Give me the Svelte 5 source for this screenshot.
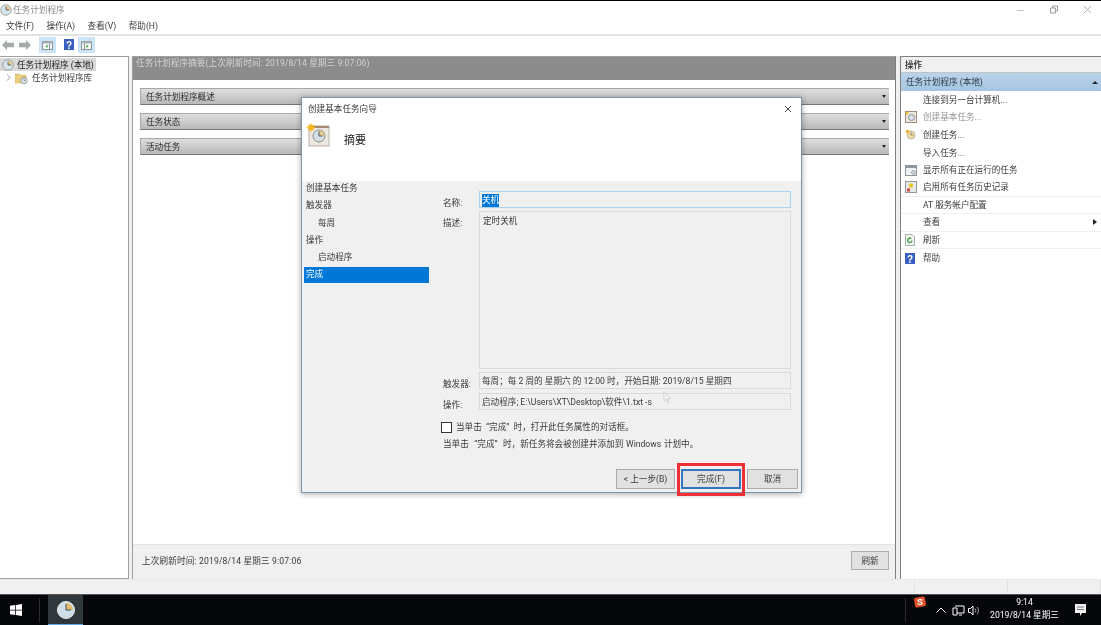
<script>
  const leftMenu = ["文件(F)", "操作(A)", "查看(V)", "帮助(H)"];
  const sections = ["任务计划程序概述", "任务状态", "活动任务"];
  const steps = [
    { label: "创建基本任务" },
    { label: "触发器" },
    { label: "每周", sub: true },
    { label: "操作" },
    { label: "启动程序", sub: true },
    { label: "完成", active: true }
  ];
  const actions = [
    { label: "连接到另一台计算机..." },
    { label: "创建基本任务...", icon: "basic", muted: true },
    { label: "创建任务...", icon: "task" },
    { label: "导入任务..." },
    { label: "显示所有正在运行的任务", icon: "running" },
    { label: "启用所有任务历史记录", icon: "history", line: true },
    { label: "AT 服务帐户配置", line: true },
    { label: "查看", arrow: true, line: true },
    { label: "刷新", icon: "refresh", line: true },
    { label: "帮助", icon: "help" }
  ];
</script>

{#snippet clock(size)}
  <svg width={size} height={size} viewBox="0 0 16 16">
    <circle cx="8" cy="8" r="7" fill="#d9e4ea" stroke="#8a8f8c" />
    <path d="M8 8V2.200A5.800 5.800 0 0 1 13.800 8Z" fill="#e8c987" />
    <path d="M8 3.500V8H12" fill="none" stroke="#3c4a58" stroke-width="1" />
  </svg>
{/snippet}

{#snippet helpIcon()}
  <svg width="10" height="11" viewBox="0 0 10 11">
    <rect width="10" height="11" fill="#3a5fc0" />
    <text x="5" y="9.500" text-anchor="middle" class="helpmark">?</text>
  </svg>
{/snippet}

{#snippet paneIcon(right)}
  <svg width="17" height="16" viewBox="0 0 17 16">
    <rect width="17" height="16" fill="#cce4f7" />
    <rect x="3.500" y="4.500" width="10" height="8" fill="#f4f6f6" stroke="#8d9696" />
    <rect x="3.500" y="4.500" width="10" height="2" fill="#a9b3b6" />
    <path d={right ? "M8.500 7.500l2 1.800-2 1.800Z" : "M8.500 7.500l-2 1.800 2 1.800Z"} fill="#3f9a3a" />
    <path d={right ? "M6.500 6.500v6" : "M10.500 6.500v6"} stroke="#8d9696" fill="none" />
  </svg>
{/snippet}

<div class="screen">
  <div class="window">
    <header class="titlebar">
      <div class="app-title">
        {@render clock(12)}
        <span>任务计划程序</span>
      </div>
      <div class="caption">
        <svg width="10" height="10" viewBox="0 0 10 10"><path d="M0 5.500h7" stroke="#c4c4c4" fill="none" /></svg>
        <svg width="10" height="10" viewBox="0 0 10 10"><path d="M.5 3h5v5h-5zM2.500 3V1h5v5h-2" stroke="#9a9a9a" fill="none" /></svg>
        <svg width="10" height="10" viewBox="0 0 10 10"><path d="M1 1l7 7M8 1L1 8" stroke="#b0b0b0" fill="none" /></svg>
      </div>
    </header>

    <nav class="menubar">
      {#each leftMenu as item}
        <span>{item}</span>
      {/each}
    </nav>

    <div class="toolbar">
      <svg class="arrow" width="12" height="10" viewBox="0 0 12 10"><path d="M0 5l5-5v2.800h7v4.400H5V10Z" fill="#a3aaa7" /></svg>
      <svg class="arrow" width="12" height="10" viewBox="0 0 12 10"><path d="M12 5L7 0v2.800H0v4.400h7V10Z" fill="#a3aaa7" /></svg>
      {@render paneIcon(false)}
      <span class="tool-help">{@render helpIcon()}</span>
      {@render paneIcon(true)}
    </div>

    <main class="panes">
      <aside class="tree">
        <div class="tree-row selected">
          {@render clock(12)}
          <span>任务计划程序 (本地)</span>
        </div>
        <div class="tree-row child">
          <svg width="5" height="7" viewBox="0 0 5 7"><path d="M1 .5l3 3-3 3" stroke="#9a9a9a" fill="none" /></svg>
          <svg width="13" height="12" viewBox="0 0 13 12">
            <path d="M0 2h4l1 1h6v8H0Z" fill="#eccf7e" stroke="#c9a850" stroke-width=".5" />
            <circle cx="9" cy="8.500" r="3.200" fill="#dfe7ea" stroke="#6c7c88" stroke-width=".7" />
            <path d="M9 6.500v2h1.500" stroke="#3c4a58" stroke-width=".6" fill="none" />
          </svg>
          <span>任务计划程序库</span>
        </div>
      </aside>

      <section class="center">
        <div class="center-head">任务计划程序摘要(上次刷新时间: 2019/8/14 星期三 9:07:06)</div>
        <div class="center-body">
          {#each sections as s}
            <div class="band"><span>{s}</span><i class="caret down"></i></div>
          {/each}
        </div>
        <div class="center-foot">
          <span>上次刷新时间: 2019/8/14 星期三 9:07:06</span>
          <button class="refresh">刷新</button>
        </div>
      </section>

      <aside class="actions">
        <div class="actions-head">操作</div>
        <div class="actions-sub"><span>任务计划程序 (本地)</span><i class="caret up"></i></div>
        <ul>
          {#each actions as a}
            <li class:line={a.line} class:muted={a.muted}>
              <span class="a-icon">
                {#if a.icon === "basic"}
                  <svg width="12" height="12" viewBox="0 0 12 12">
                    <rect x=".5" y=".5" width="11" height="11" fill="#ece7dd" stroke="#a08a7a" />
                    <circle cx="6.500" cy="6.500" r="3" fill="#d9e4ea" stroke="#8a8f8c" />
                    <circle cx="2" cy="2" r="1.500" fill="#f2c230" />
                  </svg>
                {:else if a.icon === "task"}
                  <svg width="11" height="11" viewBox="0 0 11 11">
                    <circle cx="6" cy="6" r="4" fill="#f0d9a0" stroke="#b9b9a8" />
                    <path d="M6 3.500V6h2" stroke="#6a6a6a" fill="none" stroke-width=".7" />
                    <circle cx="2.500" cy="2.500" r="1.800" fill="#ecb52c" />
                  </svg>
                {:else if a.icon === "running"}
                  <svg width="12" height="11" viewBox="0 0 12 11">
                    <rect x=".5" y=".5" width="11" height="10" fill="#eef1f2" stroke="#8d9696" />
                    <rect x="1" y="1" width="10" height="2" fill="#8d99a3" />
                    <circle cx="8.500" cy="7.500" r="2" fill="#c9d7df" stroke="#7d8a93" stroke-width=".6" />
                  </svg>
                {:else if a.icon === "history"}
                  <svg width="12" height="12" viewBox="0 0 12 12">
                    <rect x=".5" y=".5" width="11" height="11" fill="#e6ebe9" stroke="#8f9a9a" />
                    <circle cx="6" cy="4.500" r="2.200" fill="#ecc62e" />
                    <rect x="2" y="7.500" width="3" height="3" fill="#d24b3e" />
                  </svg>
                {:else if a.icon === "refresh"}
                  <svg width="10" height="12" viewBox="0 0 10 12">
                    <path d="M.5.500h6.500l2.500 2.500v8.500H.5Z" fill="#f3f6f3" stroke="#a7b0a9" />
                    <path d="M7 6.500A2.200 2.200 0 1 1 5 4.200" fill="none" stroke="#3c9a46" stroke-width="1.300" />
                    <path d="M4.500 2.800l2.300 1.400-2.300 1.400Z" fill="#3c9a46" />
                  </svg>
                {:else if a.icon === "help"}
                  {@render helpIcon()}
                {/if}
              </span>
              <span class="a-label">{a.label}</span>
              {#if a.arrow}<i class="caret right"></i>{/if}
            </li>
          {/each}
        </ul>
      </aside>
    </main>

    <footer class="status">
      <span></span><span></span><span></span>
    </footer>
  </div>

  <div class="taskbar">
    <svg class="win" width="12" height="12" viewBox="0 0 13 13">
      <path d="M0 2l5.500-.8v5H0ZM6.300 1.100L13 0v6.200H6.300ZM0 7h5.500v5L0 11.200ZM6.300 7H13v6l-6.700-1Z" fill="#fff" />
    </svg>
    <span class="task-sep"></span>
    <div class="task-app">
      <svg width="18" height="18" viewBox="0 0 18 18">
        <circle cx="9" cy="9" r="8.500" fill="#cfdde6" stroke="#e5eaec" />
        <path d="M9 9V2A7 7 0 0 1 16 9Z" fill="#e2bd6c" />
        <path d="M9 3v6h5" stroke="#43505c" stroke-width="1" fill="none" />
      </svg>
    </div>
    <div class="tray">
      <span class="task-sep"></span>
      <svg class="sogou" width="12" height="12" viewBox="0 0 12 12">
        <rect x=".5" y="1" width="11" height="10" rx="2" fill="#e2502a" transform="rotate(-10 6 6)" />
        <text x="6" y="9" text-anchor="middle" class="sogou-s">S</text>
      </svg>
      <svg class="chev" width="10" height="6" viewBox="0 0 10 6"><path d="M.5 5.500L5 1l4.500 4.500" stroke="#fff" fill="none" /></svg>
      <svg class="net" width="13" height="11" viewBox="0 0 13 11"><path d="M3 1h9v7H5M1 3h4v7H1ZM7 10h3" stroke="#fff" fill="none" /></svg>
      <svg width="12" height="11" viewBox="0 0 12 11"><path d="M.5 3.500h2l2.500-2.500v9L2.500 7.500h-2Z" stroke="#fff" fill="none" /><path d="M7 3.500a3 3 0 0 1 0 4M9 2a5 5 0 0 1 0 7" stroke="#ccc" fill="none" stroke-width=".8" /></svg>
      <div class="clock-text"><span>9:14</span><span>2019/8/14 星期三</span></div>
      <svg class="notify" width="13" height="12" viewBox="0 0 13 12">
        <path d="M1 0h11v9H8l-2 3V9H1Z" fill="#f2f2f2" />
        <path d="M3 3h7M3 5.500h7" stroke="#777" fill="none" />
      </svg>
    </div>
  </div>

  <div class="dialog">
    <div class="dlg-title">
      <span>创建基本任务向导</span>
      <svg width="8" height="8" viewBox="0 0 8 8"><path d="M1 1l6 6M7 1L1 7" stroke="#444" fill="none" /></svg>
    </div>
    <div class="dlg-head">
      <svg width="24" height="24" viewBox="0 0 24 24">
        <rect x="3" y="3" width="20" height="20" fill="#ece8df" stroke="#b8b2a8" />
        <rect x="3" y="3" width="20" height="2" fill="#a58a70" />
        <circle cx="13" cy="13" r="6" fill="#d3dfe6" stroke="#8a8f8c" />
        <path d="M13 13V7.500A5.500 5.500 0 0 1 18.500 13Z" fill="#e8c987" />
        <path d="M13 8.500V13h3.500" stroke="#4a5866" fill="none" />
        <circle cx="5" cy="4.500" r="3" fill="#f5b81e" />
        <path d="M5 0v9M.5 4.500h9M2 1.500l6 6M8 1.500l-6 6" stroke="#f5b81e" stroke-width=".8" />
      </svg>
      <span>摘要</span>
    </div>
    <div class="dlg-main">
      <ul class="steps">
        {#each steps as s}
          <li class:sub={s.sub} class:active={s.active}>{s.label}</li>
        {/each}
      </ul>
      <div class="form">
        <div class="field name">
          <label for="task-name">名称:</label>
          <div id="task-name" class="box focus"><mark>关机</mark></div>
        </div>
        <div class="field desc">
          <label for="task-desc">描述:</label>
          <div id="task-desc" class="box tall">定时关机</div>
        </div>
        <div class="field trigger">
          <label for="task-trigger">触发器:</label>
          <div id="task-trigger" class="box">每周；每 2 周的 星期六 的 12:00 时，开始日期: 2019/8/15 星期四</div>
        </div>
        <div class="field action">
          <label for="task-action">操作:</label>
          <div id="task-action" class="box">启动程序; E:\Users\XT\Desktop\软件\1.txt -s</div>
        </div>
        <div class="check"><span class="checkbox"></span><span>当单击 &nbsp;“完成”&nbsp; 时，打开此任务属性的对话框。</span></div>
        <p>当单击 &nbsp;“完成”&nbsp; 时，新任务将会被创建并添加到 Windows 计划中。</p>
      </div>
    </div>
    <div class="dlg-buttons">
      <button class="back">&lt; 上一步(B)</button>
      <button class="primary">完成(F)</button>
      <button class="cancel">取消</button>
    </div>
    <span class="highlight"></span>
    <svg class="cursor" width="9" height="13" viewBox="0 0 9 13"><path d="M1 1v9l2.200-2 1.500 3.500 1.500-.7L4.700 7.500H8Z" fill="#f4f4f4" stroke="#c4c4c4" stroke-width=".7" /></svg>
  </div>
</div>

<style>
  :global(body) {
    margin: 0;
    background: #000;
  }

  .screen {
    position: relative;
    width: 1101px;
    height: 625px;
    overflow: hidden;
    display: flex;
    flex-direction: column;
    font-family: Roboto, "Noto Sans CJK SC", "Liberation Sans", sans-serif;
    font-size: 8.600px;
    line-height: 12px;
    color: #3a3a3a;
    filter: blur(0.3px);
  }

  .window {
    margin-top: 1px;
    height: 593px;
    flex: none;
    display: flex;
    flex-direction: column;
    background: #fff;
  }

  .titlebar {
    height: 17px;
    flex: none;
    display: flex;
    justify-content: space-between;
    align-items: center;
    padding: 0 8px 0 0;
  }

  .app-title {
    display: flex;
    align-items: center;
    gap: 1px;
    color: #8a8a8a;
  }

  .caption {
    display: flex;
    gap: 23px;
  }

  .menubar {
    height: 16px;
    flex: none;
    display: flex;
    gap: 12.500px;
    align-items: center;
    padding-left: 6px;
    border-bottom: 2px solid #e3e3e3;
  }

  .toolbar {
    height: 17px;
    flex: none;
    display: flex;
    align-items: center;
    padding-left: 2px;
  }

  .arrow {
    margin-right: 5px;
  }

  .arrow + .arrow {
    margin-right: 8px;
  }

  .tool-help {
    display: flex;
    margin: 0 4px 0 8px;
  }

  .helpmark {
    font-family: "Liberation Sans", sans-serif;
    font-size: 10px;
    font-weight: 700;
    fill: #fff;
  }

  .panes {
    margin-top: 3px;
    height: 523px;
    flex: none;
    display: flex;
    background: #f0f0f0;
  }

  .tree {
    width: 129px;
    flex: none;
    margin-right: 2px;
    background: #fff;
    border-right: 1px solid #a0a0a0;
    border-bottom: 1px solid #a0a0a0;
    box-sizing: border-box;
    border-top: 1px solid #a0a0a0;
  }

  .tree-row {
    height: 13px;
    display: flex;
    align-items: center;
    gap: 3px;
    padding-left: 2px;
    margin-top: 1px;
    width: max-content;
  }

  .tree-row.selected {
    background: #d9d9d9;
    padding-right: 2px;
    color: #222;
  }

  .tree-row.child {
    padding-left: 6px;
    margin-top: 0;
    gap: 4px;
  }

  .center {
    flex: none;
    width: 764px;
    margin-left: 1px;
    border-left: 1px solid #a0a0a0;
    border-right: 1px solid #808080;
    border-top: 1px solid #a0a0a0;
    box-sizing: border-box;
    display: flex;
    flex-direction: column;
    background: #fff;
  }

  .center-head {
    height: 23px;
    flex: none;
    background: #8c8c8c;
    color: #d4d4d4;
    padding-left: 3px;
    line-height: 12px;
    letter-spacing: 0.1px;
  }

  .center-body {
    flex: 1;
    padding: 8px 6px 0 7px;
    display: flex;
    flex-direction: column;
    gap: 8px;
  }

  .band {
    height: 17px;
    box-sizing: border-box;
    display: flex;
    align-items: center;
    justify-content: space-between;
    padding: 0 3px 0 5px;
    border-top: 1px solid #a8a8a8;
    border-left: 1px solid #a8a8a8;
    border-bottom: 1px solid #777;
    background: linear-gradient(#dedede, #b9b9b9);
    color: #2e2e2e;
  }

  .caret {
    display: block;
    width: 0;
    height: 0;
  }

  .caret.down {
    border: 2px solid transparent;
    border-top: 3px solid #222;
    border-bottom: 0;
  }

  .caret.up {
    border: 3px solid transparent;
    border-bottom: 3px solid #222;
    border-top: 0;
  }

  .caret.right {
    border: 3px solid transparent;
    border-left: 4px solid #222;
    border-right: 0;
    margin-left: auto;
    margin-right: 4px;
  }

  .center-foot {
    height: 35px;
    flex: none;
    box-sizing: border-box;
    background: #f0f0f0;
    border-top: 1px solid #e3e3e3;
    display: flex;
    align-items: center;
    justify-content: space-between;
    padding: 0 6px 3px 9px;
    letter-spacing: 0.15px;
  }

  button {
    font: inherit;
    color: #3a3a3a;
    padding: 0;
    background: #e1e1e1;
    border: 1px solid #adadad;
    box-sizing: border-box;
  }

  .refresh {
    width: 38px;
    height: 19px;
  }

  .actions {
    flex: none;
    width: 201px;
    margin-left: 4px;
    box-sizing: border-box;
    background: #fff;
    border-left: 1px solid #808080;
    border-top: 1px solid #808080;
  }

  .actions-head {
    height: 16px;
    box-sizing: border-box;
    background: #f0f0f0;
    border-bottom: 1px solid #c4c4c4;
    padding-left: 4px;
    line-height: 17px;
    font-weight: 500;
    color: #222;
  }

  .actions-sub {
    height: 18px;
    display: flex;
    align-items: center;
    justify-content: space-between;
    padding: 0 3px 0 5px;
    background: linear-gradient(#b9d3e9, #a5c5e0);
    color: #2b3a48;
  }

  ul {
    list-style: none;
    margin: 0;
    padding: 0;
  }

  .actions li {
    height: 17.600px;
    box-sizing: border-box;
    display: flex;
    align-items: center;
    padding-left: 4px;
  }

  .actions li.line {
    border-bottom: 1px solid #f0f0f0;
  }

  .actions li.muted {
    color: #999;
  }

  .a-icon {
    width: 17px;
    margin-right: 1px;
    display: flex;
    flex: none;
  }

  .status {
    flex: 1;
    display: flex;
    background: #f0f0f0;
    border-top: 1px solid #e8e8e8;
  }

  .status span {
    width: 95px;
    border-right: 1px solid #e3e3e3;
  }

  .status span:first-child {
    width: 945px;
  }

  .taskbar {
    height: 31px;
    flex: none;
    background: #05070b;
    border-top: 1px solid #555;
    box-sizing: border-box;
    display: flex;
    align-items: center;
    color: #fff;
  }

  .win {
    margin-left: 10px;
  }

  .task-sep {
    width: 1px;
    height: 24px;
    background: #2d2d2d;
  }

  .taskbar > .task-sep {
    margin-left: 17px;
    margin-right: 8px;
  }

  .task-app {
    width: 35px;
    height: 30px;
    box-sizing: border-box;
    background: #30383b;
    border-bottom: 1px solid #63a9e6;
    display: flex;
    align-items: center;
    justify-content: center;
  }

  .tray {
    margin-left: auto;
    display: flex;
    align-items: center;
    height: 30px;
  }

  .sogou {
    align-self: flex-start;
    margin: 1px 10px 0 8px;
  }

  .sogou-s {
    font-family: "Liberation Sans", sans-serif;
    font-size: 9px;
    font-weight: 700;
    fill: #fff;
  }

  .chev {
    margin-right: 6px;
  }

  .net {
    margin-right: 3px;
  }

  .clock-text {
    width: 75px;
    margin: 0 0 3px 7px;
    display: flex;
    flex-direction: column;
    align-items: center;
    line-height: 13px;
  }

  .notify {
    margin: 0 14px 0 12px;
  }

  .dialog {
    position: absolute;
    left: 301px;
    top: 97px;
    width: 501px;
    height: 396px;
    box-sizing: border-box;
    background: #f0f0f0;
    border: 1px solid #7b97ad;
    box-shadow: 0 1px 6px rgba(0, 0, 0, 0.35);
    display: flex;
    flex-direction: column;
  }

  .dlg-title {
    height: 21px;
    flex: none;
    background: #fff;
    display: flex;
    align-items: center;
    justify-content: space-between;
    padding: 0 9px 0 6px;
  }

  .dlg-head {
    height: 62px;
    box-sizing: border-box;
    flex: none;
    background: #fff;
    display: flex;
    align-items: flex-start;
    padding: 4px 0 0 4px;
    gap: 14px;
  }

  .dlg-head span {
    font-size: 11px;
    margin-top: 12px;
    color: #222;
  }

  .dlg-main {
    flex: 1;
    display: flex;
    min-height: 0;
  }

  .steps {
    width: 125px;
    flex: none;
    margin-left: 2px;
  }

  .steps li {
    height: 17.300px;
    box-sizing: border-box;
    padding-left: 2px;
    line-height: 15px;
  }

  .steps li.sub {
    padding-left: 14px;
  }

  .steps li.active {
    height: 16px;
    line-height: 14px;
    background: #0078d7;
    color: #fff;
  }

  .form {
    flex: 1;
    padding: 10px 10px 0 14px;
    display: flex;
    flex-direction: column;
    min-width: 0;
  }

  .field {
    display: flex;
    gap: 8px;
  }

  .field label {
    width: 28px;
    height: 17px;
    flex: none;
    line-height: 24px;
    white-space: nowrap;
  }

  .box {
    flex: 1;
    box-sizing: border-box;
    border: 1px solid #d9d9d9;
    padding: 0 2px;
    height: 17px;
    line-height: 17px;
    background: #f0f0f0;
  }

  .box.focus {
    border-color: #a9d3f3;
  }

  mark {
    background: #0078d7;
    color: #fff;
    display: inline-block;
    height: 13px;
    line-height: 13px;
  }

  .box.tall {
    height: 158px;
    line-height: 15px;
    padding: 2px 3px;
  }

  .desc,
  .trigger {
    margin-top: 3px;
  }

  .action {
    margin-top: 4px;
  }

  .check {
    margin-top: 11px;
    display: flex;
    align-items: center;
    gap: 4px;
    margin-left: -2px;
    height: 12px;
  }

  .checkbox {
    width: 9px;
    height: 9px;
    border: 1px solid #333;
    background: #fff;
    flex: none;
  }

  p {
    margin: 5px 0 0;
    line-height: 12px;
    word-spacing: 0.6px;
  }

  .dlg-buttons {
    flex: none;
    display: flex;
    justify-content: flex-end;
    gap: 6px;
    padding: 0 3px 3px 0;
  }

  .dlg-buttons button {
    height: 20px;
  }

  .dlg-buttons .back {
    width: 59px;
  }

  .dlg-buttons .primary {
    width: 60px;
    border: 2px solid #2f78bf;
  }

  .dlg-buttons .cancel {
    width: 51px;
  }

  .highlight {
    position: absolute;
    left: 375px;
    top: 365px;
    width: 62px;
    height: 27px;
    border: 3px solid #ef2f36;
    pointer-events: none;
  }

  .cursor {
    position: absolute;
    left: 361px;
    top: 293px;
  }
</style>
